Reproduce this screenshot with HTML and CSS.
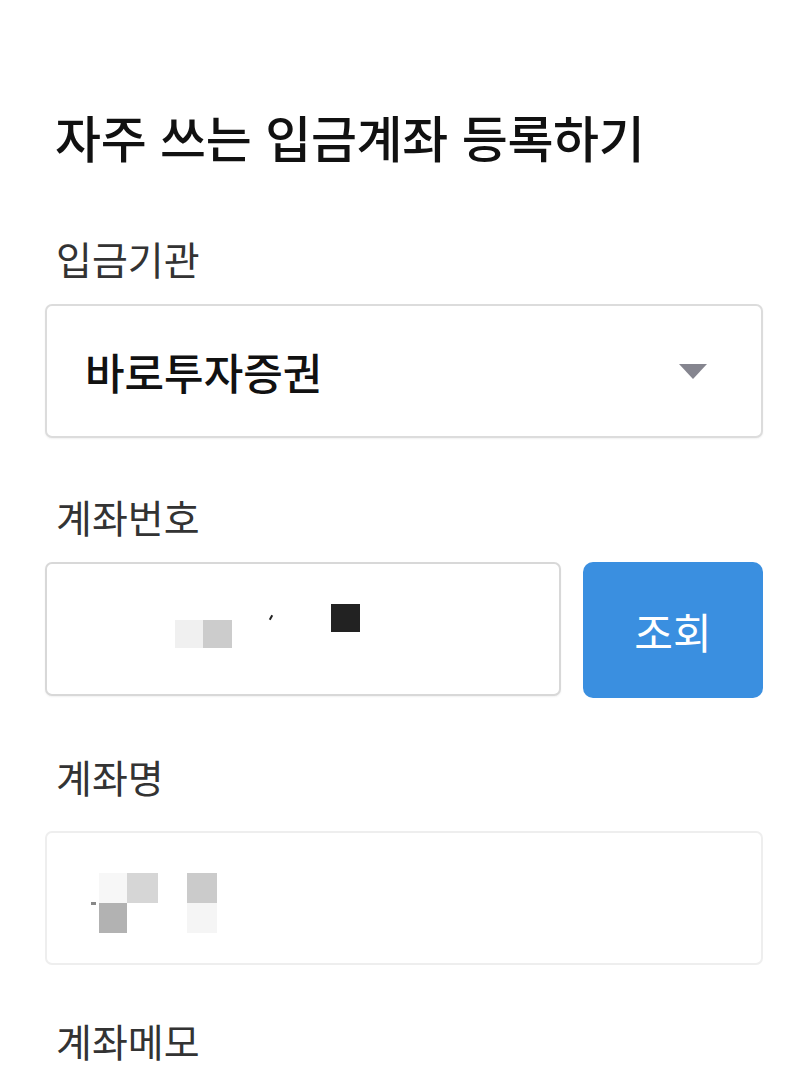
FILE: index.html
```html
<!DOCTYPE html>
<html lang="ko">
<head>
  <meta charset="UTF-8">
  <meta name="viewport" content="width=device-width, initial-scale=1.0">
  <title>자주 쓰는 입금계좌 등록하기</title>
  <link rel="stylesheet" href="styles.css">
</head>
<body>

  <div class="page">
    <h1 class="title">자주 쓰는 입금계좌 등록하기</h1>

    <!-- 입금기관 -->
    <div class="field">
      <div class="label">입금기관</div>
      <div class="box select-box">
        <span class="select-text">바로투자증권</span>
        <span class="caret"></span>
      </div>
    </div>

    <!-- 계좌번호 -->
    <div class="field">
      <div class="label">계좌번호</div>
      <div class="row">
        <div class="box account-box">
          <span class="px px-light"></span>
          <span class="px px-gray"></span>
          <span class="px-mark"></span>
          <span class="px px-black"></span>
        </div>
        <button class="search-btn">조회</button>
      </div>
    </div>

    <!-- 계좌명 -->
    <div class="field field-last">
      <div class="label label-far">계좌명</div>
      <div class="box name-box">
        <span class="name-mark"></span>
        <div class="mask">
          <span class="c1"></span><span class="c2"></span><span></span><span class="c3"></span>
          <span class="c4"></span><span></span><span></span><span class="c5"></span>
        </div>
      </div>
    </div>

    <!-- 계좌메모 -->
    <div class="field">
      <div class="label">계좌메모</div>
    </div>
  </div>

</body>
</html>
```

FILE: styles.css
```css
/* 기본 페이지 */
body {
  margin: 0;
  padding: 0;
  background: #fff;
  font-family: "Noto Sans CJK KR", "Noto Sans", sans-serif;
  color: #111;
}

.page {
  padding: 106px 43px 0 45px;
}

.title {
  margin: 0 0 67px 10px;
  font-size: 50px;
  line-height: 60px;
  font-weight: 500;
  color: #111;
  letter-spacing: -0.3px;
}

.field {
  margin-bottom: 53px;
}

.field-last {
  margin-bottom: 50px;
}

.label {
  margin: 0 0 21px 11px;
  font-size: 39px;
  line-height: 50px;
  color: #333;
}

.label-far {
  margin-bottom: 30px;
}

/* 입력 박스 */
.box {
  box-sizing: border-box;
  height: 134px;
  border: 2px solid #dcdcdc;
  border-radius: 7px;
  background: #fff;
  box-shadow: 0 1px 2px rgba(0, 0, 0, 0.06);
}

.select-box {
  display: flex;
  align-items: center;
  justify-content: space-between;
  padding: 0 54px 0 38px;
}

.select-text {
  font-size: 43px;
  font-weight: 500;
  color: #111;
}

.caret {
  width: 0;
  height: 0;
  border-left: 14px solid transparent;
  border-right: 14px solid transparent;
  border-top: 15px solid #85858f;
}

.row {
  display: flex;
  gap: 22px;
}

.account-box {
  flex: 1;
  display: flex;
  align-items: flex-start;
  padding: 40px 0 0 128px;
  border-color: #d8d8d8;
}

.px {
  display: block;
  height: 28px;
}

.px-light {
  width: 28px;
  margin-top: 16px;
  background: #f0f0f0;
}

.px-gray {
  width: 29px;
  margin-top: 16px;
  background: #cccccc;
}

.px-mark {
  width: 2px;
  height: 5px;
  margin: 11px 0 0 38px;
  background: #222;
  transform: rotate(30deg);
}

.px-black {
  width: 29px;
  margin-left: 59px;
  background: #222;
}

.search-btn {
  width: 180px;
  height: 136px;
  border: none;
  border-radius: 10px;
  background: #3a8fe0;
  color: #fff;
  font-family: inherit;
  font-size: 42px;
  cursor: pointer;
}

.name-box {
  display: flex;
  align-items: center;
  padding: 10px 0 0 44px;
  border-color: #eeeeee;
  box-shadow: none;
}

.name-mark {
  width: 5px;
  height: 3px;
  margin: 0 3px 0 0;
  background: #888;
}

.mask {
  display: grid;
  grid-template-columns: 28px 31px 29px 30px;
  grid-template-rows: 30px 30px;
}

.mask .c1 { background: #f7f7f7; }
.mask .c2 { background: #d6d6d6; }
.mask .c3 { background: #cbcbcb; }
.mask .c4 { background: #b2b2b2; }
.mask .c5 { background: #f5f5f5; }
```
